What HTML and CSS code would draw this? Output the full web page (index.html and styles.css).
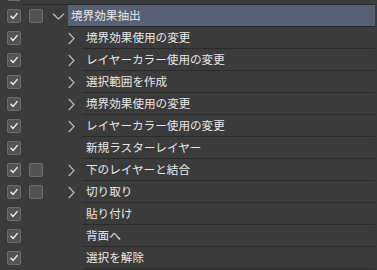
FILE: index.html
```html
<!DOCTYPE html>
<html lang="ja">
<head>
    <meta charset="UTF-8">
    <title>オートアクション</title>
    <link rel="stylesheet" href="styles.css">
</head>
<body>
    <ul class="action-list">
        <li class="row stub">
            <span class="check on"></span>
            <span class="check empty"></span>
            <span class="toggle"></span>
            <span class="cell"></span>
        </li>
        <li class="row">
            <span class="check on"><svg viewBox="0 0 14 14"><path d="M3.5 7.2 L6 9.8 L10.6 4.2"/></svg></span>
            <span class="check box"></span>
            <span class="toggle"><svg class="chev-down" viewBox="0 0 13 7"><path d="M1 0.8 L6.5 6 L12 0.8"/></svg></span>
            <span class="cell selected">境界効果抽出</span>
        </li>
        <li class="row child">
            <span class="check on"><svg viewBox="0 0 14 14"><path d="M3.5 7.2 L6 9.8 L10.6 4.2"/></svg></span>
            <span class="check empty"></span>
            <span class="toggle"><svg class="chev-right" viewBox="0 0 7 13"><path d="M0.8 1 L6 6.5 L0.8 12"/></svg></span>
            <span class="cell">境界効果使用の変更</span>
        </li>
        <li class="row child">
            <span class="check on"><svg viewBox="0 0 14 14"><path d="M3.5 7.2 L6 9.8 L10.6 4.2"/></svg></span>
            <span class="check empty"></span>
            <span class="toggle"><svg class="chev-right" viewBox="0 0 7 13"><path d="M0.8 1 L6 6.5 L0.8 12"/></svg></span>
            <span class="cell">レイヤーカラー使用の変更</span>
        </li>
        <li class="row child">
            <span class="check on"><svg viewBox="0 0 14 14"><path d="M3.5 7.2 L6 9.8 L10.6 4.2"/></svg></span>
            <span class="check empty"></span>
            <span class="toggle"><svg class="chev-right" viewBox="0 0 7 13"><path d="M0.8 1 L6 6.5 L0.8 12"/></svg></span>
            <span class="cell">選択範囲を作成</span>
        </li>
        <li class="row child">
            <span class="check on"><svg viewBox="0 0 14 14"><path d="M3.5 7.2 L6 9.8 L10.6 4.2"/></svg></span>
            <span class="check empty"></span>
            <span class="toggle"><svg class="chev-right" viewBox="0 0 7 13"><path d="M0.8 1 L6 6.5 L0.8 12"/></svg></span>
            <span class="cell">境界効果使用の変更</span>
        </li>
        <li class="row child">
            <span class="check on"><svg viewBox="0 0 14 14"><path d="M3.5 7.2 L6 9.8 L10.6 4.2"/></svg></span>
            <span class="check empty"></span>
            <span class="toggle"><svg class="chev-right" viewBox="0 0 7 13"><path d="M0.8 1 L6 6.5 L0.8 12"/></svg></span>
            <span class="cell">レイヤーカラー使用の変更</span>
        </li>
        <li class="row child">
            <span class="check on"><svg viewBox="0 0 14 14"><path d="M3.5 7.2 L6 9.8 L10.6 4.2"/></svg></span>
            <span class="check empty"></span>
            <span class="toggle"></span>
            <span class="cell">新規ラスターレイヤー</span>
        </li>
        <li class="row child">
            <span class="check on"><svg viewBox="0 0 14 14"><path d="M3.5 7.2 L6 9.8 L10.6 4.2"/></svg></span>
            <span class="check box"></span>
            <span class="toggle"><svg class="chev-right" viewBox="0 0 7 13"><path d="M0.8 1 L6 6.5 L0.8 12"/></svg></span>
            <span class="cell">下のレイヤーと結合</span>
        </li>
        <li class="row child">
            <span class="check on"><svg viewBox="0 0 14 14"><path d="M3.5 7.2 L6 9.8 L10.6 4.2"/></svg></span>
            <span class="check box"></span>
            <span class="toggle"><svg class="chev-right" viewBox="0 0 7 13"><path d="M0.8 1 L6 6.5 L0.8 12"/></svg></span>
            <span class="cell">切り取り</span>
        </li>
        <li class="row child">
            <span class="check on"><svg viewBox="0 0 14 14"><path d="M3.5 7.2 L6 9.8 L10.6 4.2"/></svg></span>
            <span class="check empty"></span>
            <span class="toggle"></span>
            <span class="cell">貼り付け</span>
        </li>
        <li class="row child">
            <span class="check on"><svg viewBox="0 0 14 14"><path d="M3.5 7.2 L6 9.8 L10.6 4.2"/></svg></span>
            <span class="check empty"></span>
            <span class="toggle"></span>
            <span class="cell">背面へ</span>
        </li>
        <li class="row child">
            <span class="check on"><svg viewBox="0 0 14 14"><path d="M3.5 7.2 L6 9.8 L10.6 4.2"/></svg></span>
            <span class="check empty"></span>
            <span class="toggle"></span>
            <span class="cell">選択を解除</span>
        </li>
    </ul>
</body>
</html>
```

FILE: styles.css
```css
html, body {
    margin: 0;
    padding: 0;
    background-color: #3b3b3b;
    overflow: hidden;
}

body {
    width: 377px;
    height: 270px;
    font-family: "Noto Sans CJK JP", "Noto Sans", sans-serif;
    font-size: 11.6px;
    color: #e8e8e8;
}

.action-list {
    list-style: none;
    margin: -17px 2px 0 0;
    padding: 0;
}

.row {
    display: flex;
    align-items: stretch;
    height: 22px;
}

.check {
    flex: 0 0 auto;
    align-self: center;
    width: 14px;
    height: 14px;
    box-sizing: border-box;
    margin-left: 7px;
    border-radius: 2px;
}

.check + .check {
    margin-left: 8px;
}

.check.on,
.check.box {
    background-color: #535353;
    border: 1px solid #6c6c6c;
}

.check svg {
    display: block;
    width: 12px;
    height: 12px;
    fill: none;
    stroke: #eeeeee;
    stroke-width: 1.7;
    stroke-linecap: round;
    stroke-linejoin: round;
}

.toggle {
    flex: 0 0 auto;
    width: 19px;
    margin-left: 6px;
    display: flex;
    align-items: center;
    justify-content: center;
}

.child .toggle {
    margin-left: 20px;
}

.toggle svg {
    fill: none;
    stroke: #b4b4b4;
    stroke-width: 1.3;
}

.chev-down {
    width: 13px;
    height: 7px;
}

.chev-right {
    width: 7px;
    height: 13px;
    margin-left: -3px;
}

.cell {
    flex: 1 1 auto;
    display: flex;
    align-items: center;
    padding-left: 4px;
    border-bottom: 1px solid #2a2a2a;
    white-space: nowrap;
    line-height: 1;
}

.stub .cell {
    margin-left: -46px;
}

.cell.selected {
    background-color: #586073;
    border-bottom-color: #25282e;
    padding-left: 3px;
}
```
